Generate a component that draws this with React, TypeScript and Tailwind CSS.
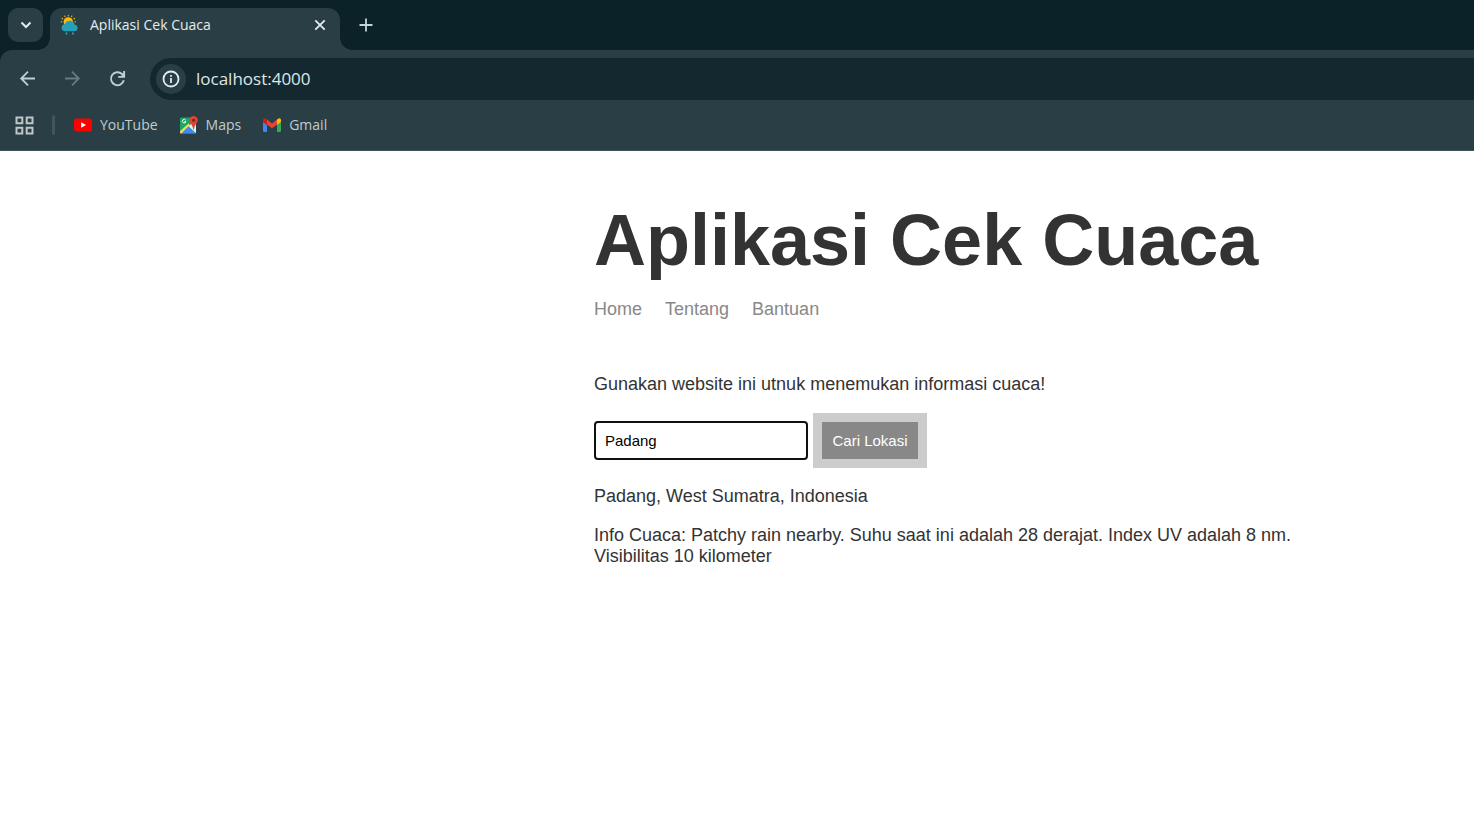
import { useState } from 'react';

const WeatherIcon = () => (
  <svg viewBox="0 0 20 20" className="size-5 shrink-0" aria-hidden="true">
    <path
      d="M8.300 .3v.5M4.800 1.100l.2.400M11.800 1.100l-.2.400M2.200 3.500l.4.300M14.500 3.500l-.4.300M1.200 6.800h.5M15.500 6.800h-.5"
      stroke="#e0aa16"
      strokeWidth="1.300"
      strokeLinecap="round"
    />
    <circle cx="8.300" cy="6.900" r="4.700" fill="#fdb813" />
    <path d="M4.500 16.300A3.600 3.600 0 0 1 4.800 9.200 5.200 5.200 0 0 1 14.600 9.400 3.600 3.600 0 0 1 15.400 16.300Z" fill="#25a0b8" />
    <path d="M6.500 18.200v.6M13 18.200v.6" stroke="#25a0b8" strokeWidth="1.800" strokeLinecap="round" />
  </svg>
);

const YouTubeIcon = () => (
  <svg viewBox="0 0 18 14" className="h-3.5 w-[18px] shrink-0" aria-hidden="true">
    <rect y=".5" width="18" height="13" rx="3" fill="#ff0000" />
    <path d="M7.2 4.2 12 7 7.2 9.8Z" fill="#fff" />
  </svg>
);

const MapsIcon = () => (
  <svg viewBox="0 0 18 18" className="size-[18px] shrink-0" aria-hidden="true">
    <path d="M1.200 1.500H12L16 6v10.300a1.200 1.200 0 0 1-1.200 1.200H1.200A1.200 1.200 0 0 1 0 16.300V2.700A1.200 1.200 0 0 1 1.200 1.500Z" fill="#1fa463" />
    <path d="M8.500 10.400 14 5l2 2v10.300Z" fill="#e8eaed" />
    <path d="M0 15.200 8.500 7.500 10 9.200 1.600 17.500H1a1 1 0 0 1-1-1Z" fill="#ffd84a" />
    <path d="M1.500 17.500 8.500 10.500 15.500 17.500Z" fill="#4285f4" />
    <path d="M5.700 4.200A1.800 1.800 0 1 0 5.900 5.700H4.300" fill="none" stroke="#fff" strokeWidth="1" />
    <path d="M13.600 0A4.200 4.200 0 0 1 17.800 4.200C17.800 7 14.300 8.500 13.900 13.800h-.6C12.900 8.500 9.400 7 9.400 4.200A4.200 4.200 0 0 1 13.600 0Z" fill="#db4437" />
    <circle cx="13.600" cy="4.200" r="1.500" fill="#7b231c" />
  </svg>
);

const GmailIcon = () => (
  <svg viewBox="0 0 18 14" className="h-3.5 w-[18px] shrink-0" aria-hidden="true">
    <path d="M0 4 4 6.800V14H1.200A1.200 1.200 0 0 1 0 12.800Z" fill="#4285f4" />
    <path d="M18 4 14 6.800V14h2.800a1.200 1.200 0 0 0 1.200-1.200Z" fill="#34a853" />
    <path d="M14 1.500 16 .3a1.700 1.700 0 0 1 2 1.900V4L14 7Z" fill="#fbbc04" />
    <path d="M4 1.500 2 .3A1.700 1.700 0 0 0 0 2.200V4L4 7Z" fill="#c5221f" />
    <path d="M4 1.500 9 5.500 14 1.500V6.500L9 10.300 4 6.500Z" fill="#ea4335" />
  </svg>
);

const bookmarks = [
  { label: 'YouTube', href: '#youtube', Icon: YouTubeIcon },
  { label: 'Maps', href: '#maps', Icon: MapsIcon },
  { label: 'Gmail', href: '#gmail', Icon: GmailIcon },
];

function TabStrip() {
  return (
    <div className="flex h-[50px] items-start bg-[#0b2228] pt-2 pl-2">
      <button type="button" aria-label="Search tabs" className="flex h-[34px] w-[35px] items-center justify-center rounded-[10px] bg-[#293f45]">
        <svg viewBox="0 0 12 12" className="size-3" fill="none" stroke="#e3ecee" strokeWidth="2" aria-hidden="true">
          <path d="m1.500 3.500 4.500 4.500 4.500-4.500" />
        </svg>
      </button>
      <div className="relative ml-[7px] flex h-[42px] w-[290px] items-center rounded-t-xl bg-[#293f45] pr-[13px] pb-2 pl-[10px]">
        <span className="absolute bottom-0 -left-3 size-3 bg-[radial-gradient(circle_at_0_0,transparent_11.500px,#293f45_12px)]" />
        <span className="absolute -right-3 bottom-0 size-3 bg-[radial-gradient(circle_at_100%_0,transparent_11.500px,#293f45_12px)]" />
        <WeatherIcon />
        <span className="ml-[10px] flex-1 text-sm whitespace-nowrap text-[#e3ecee]">Aplikasi Cek Cuaca</span>
        <button type="button" aria-label="Close tab">
          <svg viewBox="0 0 14 14" className="size-[14px]" fill="none" stroke="#e3ecee" strokeWidth="1.800" aria-hidden="true">
            <path d="m2.300 2.300 9.400 9.400M11.700 2.300 2.300 11.700" />
          </svg>
        </button>
      </div>
      <button type="button" aria-label="New tab" className="ml-[19px] flex h-[34px] items-center">
        <svg viewBox="0 0 14 14" className="size-[14px]" fill="none" stroke="#c2d5da" strokeWidth="1.800" aria-hidden="true">
          <path d="M7 .5v13M.5 7h13" />
        </svg>
      </button>
    </div>
  );
}

function Toolbar() {
  return (
    <div className="bg-[#0b2228]">
      <div className="flex h-[50px] items-center rounded-tl-xl bg-[#293f45] pt-2 pl-[19px]">
        <button type="button" aria-label="Back">
          <svg viewBox="0 0 18 18" className="size-[18px]" fill="none" stroke="#bed0d5" strokeWidth="1.800" aria-hidden="true">
            <path d="M16 8.500H2.500M9 1.700l-6.800 6.800L9 15.300" />
          </svg>
        </button>
        <button type="button" aria-label="Forward" disabled className="ml-[27px]">
          <svg viewBox="0 0 18 18" className="size-[18px]" fill="none" stroke="#697b80" strokeWidth="1.800" aria-hidden="true">
            <path d="M1 8.500h13.500M8 1.700l6.800 6.800L8 15.300" />
          </svg>
        </button>
        <button type="button" aria-label="Reload" className="ml-[27px]">
          <svg viewBox="0 0 18 18" className="size-[18px]" fill="none" stroke="#bed0d5" strokeWidth="1.900" aria-hidden="true">
            <path d="M14.800 10.300A6.500 6.500 0 1 1 13 4L14.300 5.500M15.100 1v5.900H9.200" />
            <path d="M15 3.200V7h-3.800Z" fill="#bed0d5" stroke="none" />
          </svg>
        </button>
        <div className="ml-[23px] flex h-[42px] flex-1 items-center rounded-l-full bg-[#13292f] pl-1.5">
          <button type="button" aria-label="View site information" className="flex size-[30px] shrink-0 items-center justify-center rounded-full bg-[#293f45]">
            <svg viewBox="0 0 18 18" className="size-[18px]" fill="none" stroke="#e3ecee" strokeWidth="1.800" aria-hidden="true">
              <circle cx="9" cy="9" r="7.500" />
              <path d="M9 8v5M9 5v1.800" />
            </svg>
          </button>
          <input aria-label="Address" defaultValue="localhost:4000" className="ml-[10px] min-w-0 flex-1 bg-transparent text-[17px] text-[#dfe6e8] outline-none" />
        </div>
      </div>
    </div>
  );
}

function BookmarksBar() {
  return (
    <nav aria-label="Bookmarks" className="flex h-[51px] items-center border-b border-[#3f5257] bg-[#293f45] pl-[15px] text-sm text-[#c3cbcd]">
      <button type="button" aria-label="All apps">
        <svg viewBox="0 0 19 19" className="size-[19px]" fill="none" stroke="#c0c6c7" strokeWidth="2" aria-hidden="true">
          <path d="M1.500 1.500h5.800v5.800H1.500zM11.700 1.500h5.800v5.800h-5.800zM1.500 11.700h5.800v5.800H1.500zM11.700 11.700h5.800v5.800h-5.800z" />
        </svg>
      </button>
      <span className="ml-[18px] h-5 w-[3px] rounded-full bg-[#40555c]" />
      <div className="ml-[19px] flex gap-[22px]">
        {bookmarks.map(({ label, href, Icon }) => (
          <a key={label} href={href} className="flex items-center gap-2">
            <Icon />
            {label}
          </a>
        ))}
      </div>
    </nav>
  );
}

export default function App() {
  const [location, setLocation] = useState('Padang');

  return (
    <div className="min-h-screen bg-white">
      <header className="font-['Open_Sans',sans-serif]">
        <TabStrip />
        <Toolbar />
        <BookmarksBar />
      </header>
      <main className="ml-[594px] max-w-[731px] pt-12 font-['Liberation_Sans',Arial,sans-serif] text-[18px] leading-[21px] text-[#333]">
        <h1 className="text-7xl leading-[82px] font-bold whitespace-nowrap">Aplikasi Cek Cuaca</h1>
        <nav aria-label="Main" className="mt-[18px] flex gap-[23px] text-[#888]">
          <a href="#home">Home</a>
          <a href="#tentang">Tentang</a>
          <a href="#bantuan">Bantuan</a>
        </nav>
        <p className="mt-[54px]">Gunakan website ini utnuk menemukan informasi cuaca!</p>
        <form className="mt-[18px] flex items-center gap-[5px]" onSubmit={(event) => event.preventDefault()}>
          <input
            aria-label="Lokasi"
            value={location}
            onChange={(event) => setLocation(event.target.value)}
            className="h-[39px] w-[214px] rounded border-2 border-[#101010] px-[9px] text-[15px] text-black outline-none"
          />
          <button type="submit" className="h-[55px] w-[114px] border-[9px] border-[#ccc] bg-[#888] text-[15px] whitespace-nowrap text-white">
            Cari Lokasi
          </button>
        </form>
        <p className="mt-[18px]">Padang, West Sumatra, Indonesia</p>
        <p className="mt-[18px]">
          Info Cuaca: Patchy rain nearby. Suhu saat ini adalah 28 derajat. Index UV adalah 8 nm. Visibilitas 10 kilometer
        </p>
      </main>
    </div>
  );
}
